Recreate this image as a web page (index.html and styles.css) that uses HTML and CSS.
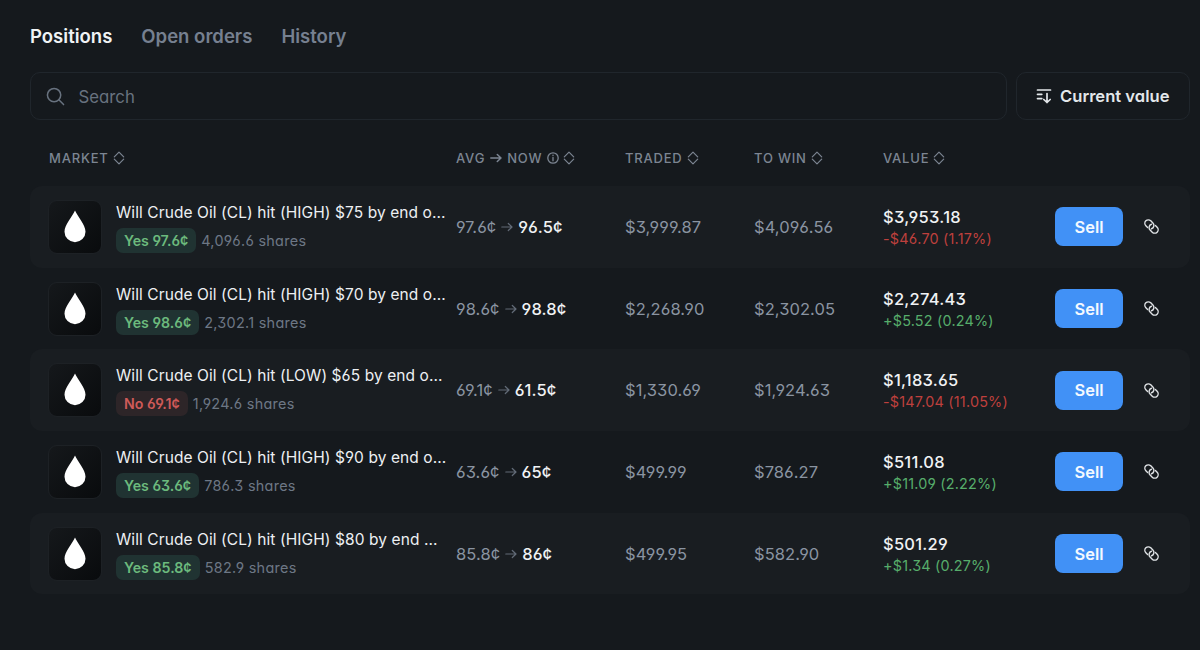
FILE: index.html
```html
<!DOCTYPE html>
<html lang="en">
<head>
<meta charset="utf-8">
<title>Positions</title>
<link rel="stylesheet" href="styles.css">
</head>
<body>
<svg class="sprite" aria-hidden="true">
  <symbol id="sort" viewBox="0 0 12 14"><path d="M1.300 5.900 6 1.200l4.700 4.700M1.300 8.100 6 12.800l4.700-4.700"/></symbol>
  <symbol id="arrow" viewBox="0 0 12 10"><path d="M.8 5h10.200M7.300 1.500 11 5 7.300 8.500"/></symbol>
  <symbol id="link" viewBox="0 0 16 16"><g transform="rotate(45 8 8)"><path d="M5.800 11.700H3.200a3.700 3.700 0 0 1 0-7.400h3.200a3.700 3.700 0 0 1 3.300 5.400"/><path d="M10.200 4.300h2.600a3.700 3.700 0 0 1 0 7.400H9.600a3.700 3.700 0 0 1-3.300-5.400"/></g></symbol>
  <symbol id="drop" viewBox="0 0 22 33"><path d="M11 .5C8.500 6.500.5 14.500.5 21.700a10.500 10.500 0 0 0 21 0C21.500 14.500 13.500 6.500 11 .5z"/></symbol>
</svg>
<main class="page">
  <nav class="tabs"><a class="tab active">Positions</a><a class="tab">Open orders</a><a class="tab">History</a></nav>
  <div class="tools">
    <div class="search">
      <svg class="search-icon" viewBox="0 0 20 20"><circle cx="8.500" cy="8.500" r="7"/><path d="m13.500 13.500 5 5"/></svg>
      <span>Search</span>
    </div>
    <button class="order"><svg class="order-icon" viewBox="0 0 16 16"><path d="M1.500 2h13M1.500 6.300h4.300M1.500 10.600h4.300M11 5.500v9M7.800 11.500l3.200 3 3.200-3"/></svg><span>Current value</span></button>
  </div>
  <div class="grid head">
    <div>MARKET<svg class="sort"><use href="#sort"/></svg></div>
    <div>AVG<svg class="head-arrow"><use href="#arrow"/></svg>NOW<svg class="info" viewBox="0 0 12 12"><circle cx="6" cy="6" r="5.200"/><path d="M6 5.500v3.300M6 3.100v.4"/></svg><svg class="sort"><use href="#sort"/></svg></div>
    <div>TRADED<svg class="sort"><use href="#sort"/></svg></div>
    <div>TO WIN<svg class="sort"><use href="#sort"/></svg></div>
    <div>VALUE<svg class="sort last"><use href="#sort"/></svg></div>
  </div>
  <div class="rows">
    <div class="grid row">
      <div class="market"><span class="thumb"><svg><use href="#drop"/></svg></span><div class="info-col"><div class="title">Will Crude Oil (CL) hit (HIGH) $75 by end o...</div><div class="sub"><span class="pill">Yes 97.6¢</span><span>4,096.6 shares</span></div></div></div>
      <div class="price">97.6¢<svg><use href="#arrow"/></svg><b>96.5¢</b></div><div class="num">$3,999.87</div><div class="num">$4,096.56</div>
      <div class="value"><b>$3,953.18</b><span class="down">-$46.70 (1.17%)</span></div>
      <button class="sell">Sell</button><svg class="link"><use href="#link"/></svg>
    </div>
    <div class="grid row">
      <div class="market"><span class="thumb"><svg><use href="#drop"/></svg></span><div class="info-col"><div class="title">Will Crude Oil (CL) hit (HIGH) $70 by end o...</div><div class="sub"><span class="pill">Yes 98.6¢</span><span>2,302.1 shares</span></div></div></div>
      <div class="price">98.6¢<svg><use href="#arrow"/></svg><b>98.8¢</b></div><div class="num">$2,268.90</div><div class="num">$2,302.05</div>
      <div class="value"><b>$2,274.43</b><span class="up">+$5.52 (0.24%)</span></div>
      <button class="sell">Sell</button><svg class="link"><use href="#link"/></svg>
    </div>
    <div class="grid row">
      <div class="market"><span class="thumb"><svg><use href="#drop"/></svg></span><div class="info-col"><div class="title">Will Crude Oil (CL) hit (LOW) $65 by end o...</div><div class="sub"><span class="pill no">No 69.1¢</span><span>1,924.6 shares</span></div></div></div>
      <div class="price">69.1¢<svg><use href="#arrow"/></svg><b>61.5¢</b></div><div class="num">$1,330.69</div><div class="num">$1,924.63</div>
      <div class="value"><b>$1,183.65</b><span class="down">-$147.04 (11.05%)</span></div>
      <button class="sell">Sell</button><svg class="link"><use href="#link"/></svg>
    </div>
    <div class="grid row">
      <div class="market"><span class="thumb"><svg><use href="#drop"/></svg></span><div class="info-col"><div class="title">Will Crude Oil (CL) hit (HIGH) $90 by end o...</div><div class="sub"><span class="pill">Yes 63.6¢</span><span>786.3 shares</span></div></div></div>
      <div class="price">63.6¢<svg><use href="#arrow"/></svg><b>65¢</b></div><div class="num">$499.99</div><div class="num">$786.27</div>
      <div class="value"><b>$511.08</b><span class="up">+$11.09 (2.22%)</span></div>
      <button class="sell">Sell</button><svg class="link"><use href="#link"/></svg>
    </div>
    <div class="grid row">
      <div class="market"><span class="thumb"><svg><use href="#drop"/></svg></span><div class="info-col"><div class="title">Will Crude Oil (CL) hit (HIGH) $80 by end ...</div><div class="sub"><span class="pill">Yes 85.8¢</span><span>582.9 shares</span></div></div></div>
      <div class="price">85.8¢<svg><use href="#arrow"/></svg><b>86¢</b></div><div class="num">$499.95</div><div class="num">$582.90</div>
      <div class="value"><b>$501.29</b><span class="up">+$1.34 (0.27%)</span></div>
      <button class="sell">Sell</button><svg class="link"><use href="#link"/></svg>
    </div>
  </div>
</main>
</body>
</html>
```
FILE: styles.css
```css
* { box-sizing: border-box; }
body { margin: 0; background: #15191d; color: #e9edf1; font-family: Inter, sans-serif; font-feature-settings: "cv03", "cv04", "cv09", "cv11"; }
svg { fill: none; stroke: currentColor; stroke-linecap: round; stroke-linejoin: round; flex: none; }
button { font: inherit; font-feature-settings: inherit; }
.sprite { display: none; }
.page { height: 650px; overflow: hidden; padding: 24px 10px 0 30px; }
.tabs { display: flex; gap: 29px; height: 24px; align-items: center; }
.tab { font-size: 18.550px; font-weight: 600; color: #768090; }
.tab.active { color: #f0f3f5; }
.tools { display: flex; gap: 9px; margin-top: 24px; height: 48px; }
.search, .order { border: 1px solid #20262c; border-radius: 10px; display: flex; align-items: center; }
.search { flex: 1; padding-left: 14.500px; gap: 14px; color: #68727f; font-size: 16.800px; }
.search span { padding-top: 2px; }
.search-icon { width: 19px; height: 19px; stroke-width: 1.600; }
.order { width: 174px; background: none; color: #e3e7ea; padding: 0 0 0 19px; gap: 8px; font-size: 16.600px; font-weight: 600; white-space: nowrap; }
.order-icon { width: 16px; height: 16px; stroke-width: 1.700; }
.grid { display: grid; grid-template-columns: 407px 169px 129px 129px 172px 68px 1fr; padding-left: 19px; align-items: center; }
.head { height: 24px; margin-top: 26px; font-size: 13px; font-weight: 500; letter-spacing: .8px; color: #7c8592; }
.head > div { display: flex; align-items: center; white-space: nowrap; }
.sort { width: 12px; height: 14px; margin-left: 4px; stroke-width: 1.200; }
.head-arrow { width: 12px; height: 10px; margin: 0 5px; stroke-width: 1.500; }
.info { width: 12px; height: 12px; margin-left: 5px; stroke-width: 1.300; }
.rows { margin-top: 16px; }
.row { height: 81.700px; border-radius: 12px; }
.row:nth-child(odd) { background: #191d21; }
.market { display: flex; gap: 14px; align-items: center; margin-left: -1px; }
.thumb { width: 54px; height: 54px; border-radius: 9px; background: linear-gradient(135deg, #15181b, #090b0d); border: 1px solid #1d2125; display: grid; place-items: center; color: #fff; }
.thumb svg { width: 22px; height: 33px; margin-top: -1px; fill: #fff; stroke: none; }
.title { font-size: 15.500px; line-height: 24px; letter-spacing: .085px; white-space: nowrap; color: #edf0f3; }
.sub { display: flex; align-items: center; gap: 5px; margin-top: 3px; font-size: 14.400px; letter-spacing: .3px; color: #6d7785; white-space: nowrap; }
.pill { height: 25px; padding: 0 8px; border-radius: 7px; font-size: 14.200px; line-height: 25px; font-weight: 600; letter-spacing: 0; background: #203332; color: #6cba7d; }
.pill.no { background: #2d2528; color: #cf5a58; }
.price, .num { font-size: 16.500px; letter-spacing: .07px; color: #8a94a1; white-space: nowrap; }
.price { display: flex; align-items: center; }
.price svg { width: 12px; height: 10px; margin: 0 5px; color: #626b77; stroke-width: 1.200; }
b { font-weight: 500; color: #f0f2f4; }
.value { display: flex; flex-direction: column; white-space: nowrap; font-size: 16.500px; letter-spacing: .25px; line-height: 22px; }
.value b { padding-top: 2px; }
.value span { font-size: 14.400px; letter-spacing: .2px; }
.down { color: #be403d; }
.up { color: #57ad6b; }
.sell { height: 39px; width: 68px; border: 0; border-radius: 8px; background: #4191f6; color: #f4f9ff; font-size: 16.400px; font-weight: 600; padding: 0; }
.link { width: 15px; height: 15px; margin-left: 21px; color: #e0e3e6; stroke-width: 1.500; }
```
